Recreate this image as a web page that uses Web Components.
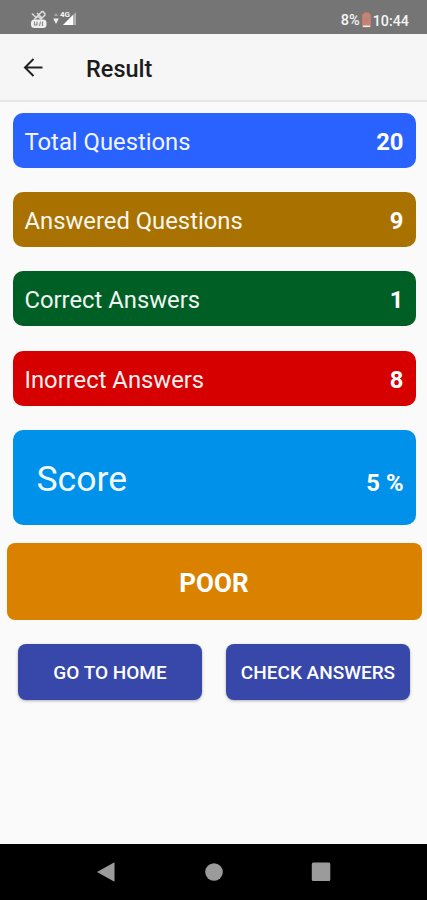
<!DOCTYPE html>
<html lang="en">
<head>
<meta charset="utf-8">
<meta name="viewport" content="width=device-width, initial-scale=1">
<title>Result</title>
<style>
  body {
    margin: 0;
    background: #fafafa;
    font-family: Roboto, "Liberation Sans", sans-serif;
  }
</style>
</head>
<body>
<result-screen></result-screen>

<script>
class StatusBar extends HTMLElement {
  connectedCallback() {
    const root = this.attachShadow({ mode: "open" });
    root.innerHTML = `
      <style>
        :host {
          display: flex;
          box-sizing: border-box;
          height: 34px;
          align-items: center;
          justify-content: space-between;
          padding: 6px 18px 0 30px;
          background: #757575;
          color: #f4f4f4;
          font-size: 14.3px;
          font-weight: 500;
          line-height: 16px;
        }

        .icons, .info {
          display: flex;
          align-items: center;
        }

        .info {
          padding-top: 1px;
        }

        .network {
          font-size: 8px;
          font-weight: 700;
        }

        svg {
          display: block;
        }

        .percent {
          font-size: 14.5px;
        }
      </style>
      <div class="icons">
        <svg width="48" height="22" viewBox="0 0 48 22" aria-hidden="true">
          <g fill="none" stroke="#dcdcdc" stroke-width="1.5">
            <path d="M2 4.5l4 4L12.5 2M7 4l5 5M4 10.5l4-3 3 2.5 4.5-4.5M12.5 2l3 3.5" />
          </g>
          <rect x="1" y="10.5" width="15.5" height="8.5" rx="3.5" fill="#f0f0f0" />
          <path d="M4.5 12.5v3.5h2.500v-3.5M9.5 17l1-4.5M12.5 12.5v4.5" fill="none" stroke="#858585" stroke-width="1.1" />
          <path d="M26 4l2 3h-4z" fill="#a8a8a8" />
          <path d="M23.2 9.5h5.6L26 15z" fill="#f0f0f0" />
          <path d="M33 16L46 3v13z" fill="#b0b0b0" />
          <path d="M33 16l10-10v10z" fill="#fff" />
          <text class="network" x="30" y="7.5" fill="#f4f4f4">4G</text>
        </svg>
      </div>
      <div class="info">
        <span class="percent">8%</span>
        <svg width="13" height="18" viewBox="0 0 13 18" aria-hidden="true">
          <path d="M4.5 1h4v1.5h1.7v12.5h-7.4V2.5h1.7z" fill="#b28b80" stroke="#e07a62" stroke-width="1.1" />
          <path d="M3 13.5h7v1.5H3z" fill="#eee" />
          <path d="M6.5 6.5v4M4.8 8.5h3.4" stroke="#e66f57" stroke-width="1.5" />
        </svg>
        <span>10:44</span>
      </div>
    `;
  }
}

class AppBar extends HTMLElement {
  connectedCallback() {
    const root = this.attachShadow({ mode: "open" });
    root.innerHTML = `
      <style>
        :host {
          display: flex;
          box-sizing: border-box;
          height: 68px;
          align-items: center;
          gap: 43px;
          padding: 0 24px 0 23px;
          border-bottom: 2px solid #e7e7e7;
          background: #f6f6f6;
          color: #1c1c1c;
        }

        h1 {
          margin: 3px 0 0;
          font-size: 23.5px;
          font-weight: 500;
          line-height: 28px;
        }
      </style>
      <svg width="20" height="20" viewBox="0 0 20 20" fill="none" stroke="#222" stroke-width="2" aria-hidden="true">
        <path d="M19.5 10.5H2.5M10.5 2L2 10.5l8.5 8.5" />
      </svg>
      <h1><slot></slot></h1>
    `;
  }
}

class StatCard extends HTMLElement {
  connectedCallback() {
    const root = this.attachShadow({ mode: "open" });
    root.innerHTML = `
      <style>
        :host {
          display: flex;
          box-sizing: border-box;
          height: 55px;
          align-items: center;
          justify-content: space-between;
          padding: 3px 12px 0;
          border-radius: 10px;
          background: var(--card-color);
          color: #fff;
          font-size: 23.8px;
          line-height: 28px;
        }

        :host([large]) {
          height: 95px;
          padding: 3px 12px 0 24px;
        }

        :host([large]) .label {
          font-size: 35.6px;
          line-height: 42px;
        }

        :host([large]) .value {
          padding-top: 8px;
        }

        .label {
          opacity: 0.94;
        }

        .value {
          font-weight: 700;
        }
      </style>
      <span class="label"><slot></slot></span>
      <span class="value">${this.getAttribute("value")}</span>
    `;
  }
}

class GradeBanner extends HTMLElement {
  connectedCallback() {
    const root = this.attachShadow({ mode: "open" });
    root.innerHTML = `
      <style>
        :host {
          display: flex;
          box-sizing: border-box;
          height: 77px;
          align-items: center;
          justify-content: center;
          padding-top: 3px;
          border-radius: 8px;
          background: #da8200;
          color: #fff;
          font-size: 26px;
          font-weight: 700;
        }
      </style>
      <slot></slot>
    `;
  }
}

class ActionButton extends HTMLElement {
  connectedCallback() {
    const root = this.attachShadow({ mode: "open" });
    root.innerHTML = `
      <style>
        :host {
          display: block;
          flex: 1;
        }

        button {
          display: block;
          width: 100%;
          height: 56px;
          padding: 1px 0 0;
          border: 0;
          border-radius: 8px;
          background: #3747aa;
          box-shadow: 0 1px 3px rgba(0, 0, 0, 0.3);
          color: #fff;
          font: 500 19px Roboto, "Liberation Sans", sans-serif;
          white-space: nowrap;
        }
      </style>
      <button type="button"><slot></slot></button>
    `;
  }
}

class NavigationBar extends HTMLElement {
  connectedCallback() {
    const root = this.attachShadow({ mode: "open" });
    root.innerHTML = `
      <style>
        :host {
          display: flex;
          height: 56px;
          align-items: center;
          justify-content: center;
          gap: 87px;
          background: #000;
        }

        svg {
          width: 20px;
          height: 20px;
          fill: #9b9b9b;
        }
      </style>
      <svg viewBox="0 0 20 20"><path d="M0 10L17.5 .2v19.6z" /></svg>
      <svg viewBox="0 0 20 20"><circle cx="10" cy="10" r="8.8" /></svg>
      <svg viewBox="0 0 20 20"><rect x=".8" y=".5" width="18.5" height="18.5" rx="1.5" /></svg>
    `;
  }
}

class ResultScreen extends HTMLElement {
  connectedCallback() {
    const root = this.attachShadow({ mode: "open" });
    root.innerHTML = `
      <style>
        :host {
          display: flex;
          height: 900px;
          flex-direction: column;
          overflow: hidden;
        }

        main {
          flex: 1;
          padding-top: 10.8px;
        }

        .stats {
          display: grid;
          gap: 24.3px;
          padding: 0 11.5px 0 12.5px;
        }

        grade-banner {
          margin: 18.2px 5.5px 0 6.5px;
        }

        .actions {
          display: flex;
          gap: 24px;
          padding: 24.1px 17px 0 18px;
        }
      </style>
      <status-bar></status-bar>
      <app-bar>Result</app-bar>
      <main>
        <div class="stats">
          <stat-card value="20" style="--card-color: #2962ff">Total Questions</stat-card>
          <stat-card value="9" style="--card-color: #a97200">Answered Questions</stat-card>
          <stat-card value="1" style="--card-color: #005f24">Correct Answers</stat-card>
          <stat-card value="8" style="--card-color: #d60000">Inorrect Answers</stat-card>
          <stat-card large value="5 %" style="--card-color: #0091ea">Score</stat-card>
        </div>
        <grade-banner>POOR</grade-banner>
        <div class="actions">
          <action-button>GO TO HOME</action-button>
          <action-button>CHECK ANSWERS</action-button>
        </div>
      </main>
      <navigation-bar></navigation-bar>
    `;
  }
}

customElements.define("status-bar", StatusBar);
customElements.define("app-bar", AppBar);
customElements.define("stat-card", StatCard);
customElements.define("grade-banner", GradeBanner);
customElements.define("action-button", ActionButton);
customElements.define("navigation-bar", NavigationBar);
customElements.define("result-screen", ResultScreen);
</script>
</body>
</html>
